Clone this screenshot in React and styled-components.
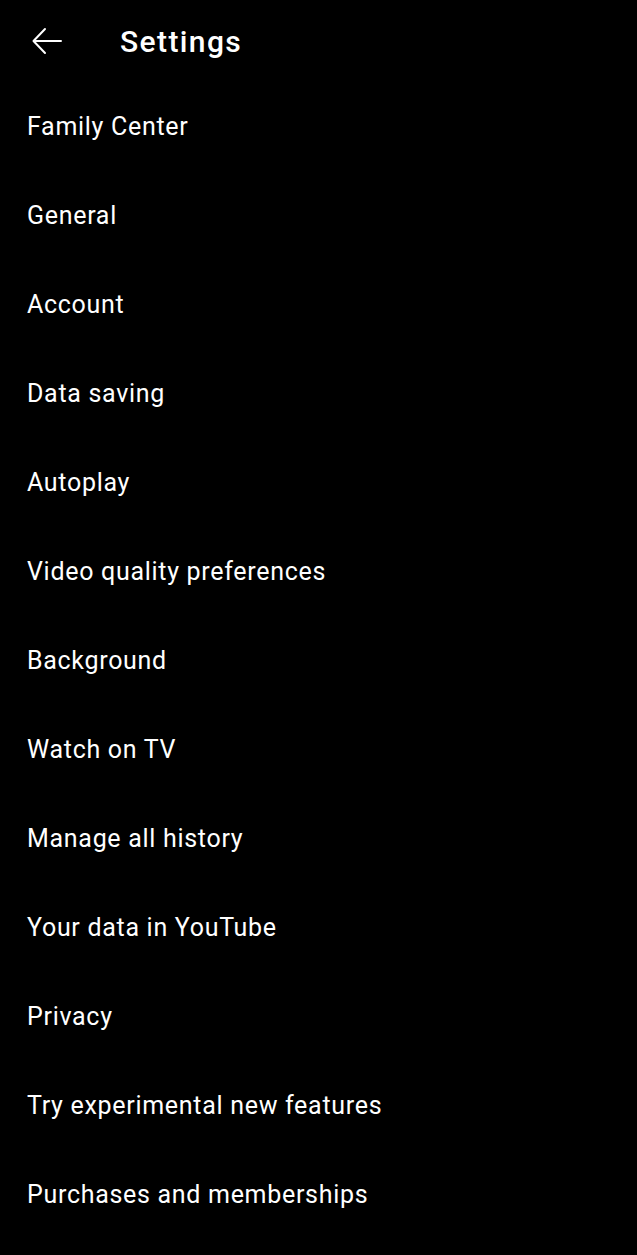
import React from "react";
import styled, { createGlobalStyle } from "styled-components";

const GlobalStyle = createGlobalStyle`
	html, body {
		margin: 0;
		padding: 0;
		background: #000;
	}
	body {
		font-family: Roboto, "Noto Sans", sans-serif;
		color: #fff;
	}
`;

const items = [
	"Family Center",
	"General",
	"Account",
	"Data saving",
	"Autoplay",
	"Video quality preferences",
	"Background",
	"Watch on TV",
	"Manage all history",
	"Your data in YouTube",
	"Privacy",
	"Try experimental new features",
	"Purchases and memberships",
];

function App() {
	return (
		<Page>
			<GlobalStyle />
			<Header>
				<BackButton>
					<svg width="32" height="28" viewBox="0 0 32 28" fill="none">
						<path
							d="M30 14H3M14 2L2.5 14L14 26"
							stroke="#fff"
							strokeWidth="2"
							strokeLinecap="round"
							strokeLinejoin="round"
						/>
					</svg>
				</BackButton>
				<Title>Settings</Title>
			</Header>
			<List>
				{items.map((item) => (
					<Row key={item}>{item}</Row>
				))}
			</List>
		</Page>
	);
}

export default App;

const Page = styled.div`
	width: 637px;
	min-height: 1255px;
	background: #000;
`;
const Header = styled.div`
	display: flex;
	align-items: center;
	height: 82px;
	padding-left: 31px;
`;
const BackButton = styled.span`
	display: flex;
	align-items: center;
	width: 32px;
	margin-right: 57px;
	svg {
		display: block;
	}
`;
const Title = styled.h1`
	margin: 0;
	font-size: 30px;
	font-weight: 500;
	letter-spacing: 1.4px;
	color: #fff;
`;
const List = styled.div`
	display: flex;
	flex-direction: column;
`;
const Row = styled.div`
	height: 89px;
	display: flex;
	align-items: center;
	padding-left: 27px;
	font-size: 25px;
	letter-spacing: 0.7px;
	color: #fff;
	cursor: pointer;
`;
